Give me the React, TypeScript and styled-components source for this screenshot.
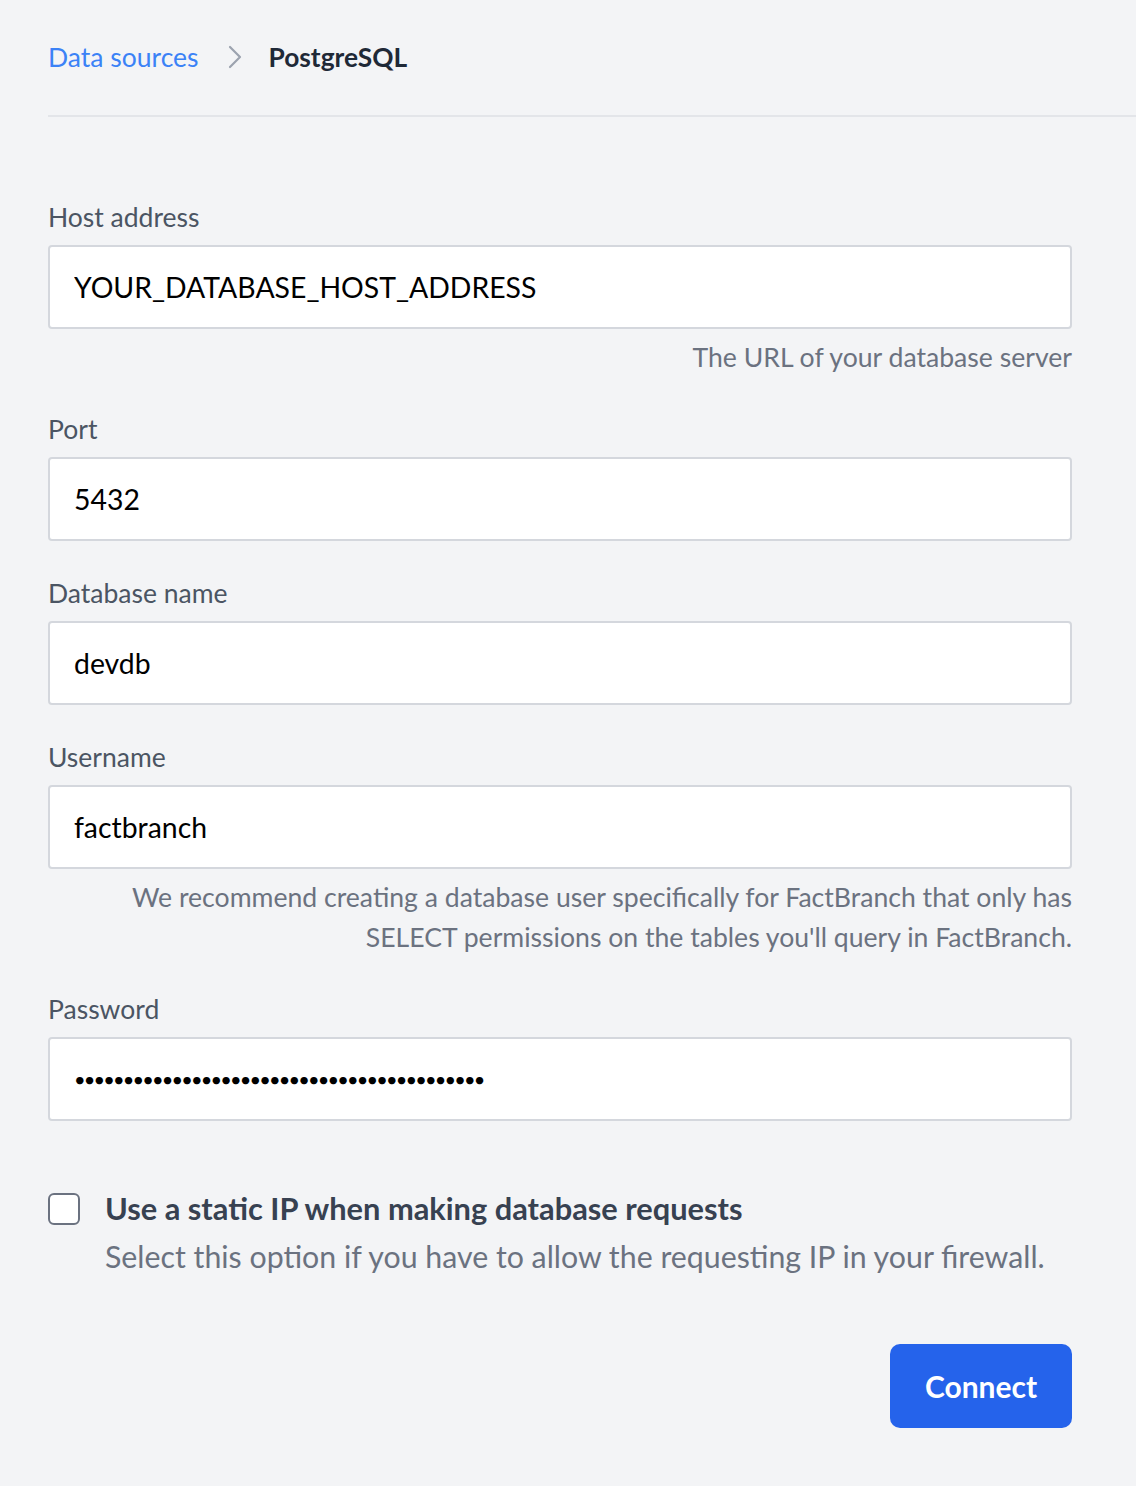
import React from 'react';
import styled, { createGlobalStyle } from 'styled-components';

const GlobalStyle = createGlobalStyle`
  html, body {
    margin: 0;
    padding: 0;
    background: #f3f4f6;
  }
  body {
    font-family: Lato, 'Liberation Sans', sans-serif;
    -webkit-font-smoothing: antialiased;
  }
  * {
    box-sizing: border-box;
  }
`;

const Page = styled.div`
  min-height: 1486px;
  padding-left: 48px;
  background: #f3f4f6;
`;

const Header = styled.div`
  height: 117px;
  display: flex;
  align-items: center;
  border-bottom: 2px solid #e3e5e9;
  padding-bottom: 2px;
`;

const Crumb = styled.a`
  font-size: 26.5px;
  color: #3b82f6;
  text-decoration: none;
`;

const Chevron = styled.span`
  display: flex;
  margin: 0 27px 0 29px;
  color: #9ca3af;
`;

const Current = styled.span`
  font-size: 26.3px;
  font-weight: 700;
  color: #1f2937;
`;

const Form = styled.form`
  width: 1024px;
  padding-top: 80px;
`;

const Field = styled.div`
  margin-bottom: 32px;
`;

const Label = styled.label`
  display: block;
  font-size: 26.5px;
  line-height: 40px;
  color: #4b5563;
  margin-bottom: 8px;
`;

const Input = styled.input<{ $secret?: boolean }>`
  display: block;
  width: 100%;
  height: 84px;
  padding: 0 24px;
  border: 2px solid #d4d7dd;
  border-radius: 4px;
  background: #fff;
  font-family: inherit;
  font-size: ${(p) => (p.$secret ? '20px' : '28.4px')};
  letter-spacing: ${(p) => (p.$secret ? '-1.85px' : 'normal')};
  color: #000;
  outline: none;
`;

const Help = styled.p`
  margin: 8px 0 0;
  font-size: 26.6px;
  line-height: 40px;
  color: #6b7280;
  text-align: right;
`;

const CheckRow = styled.div`
  display: flex;
  gap: 25px;
  margin-top: 68px;
`;

const Box = styled.span`
  flex: none;
  width: 32px;
  height: 32px;
  margin-top: 4px;
  border: 2px solid #6b7280;
  border-radius: 6px;
  background: #fff;
`;

const CheckText = styled.div`
  display: flex;
  flex-direction: column;
  gap: 7px;
`;

const CheckTitle = styled.span`
  font-size: 30.8px;
  line-height: 40px;
  font-weight: 700;
  color: #374151;
`;

const CheckDesc = styled.span`
  font-size: 30.3px;
  line-height: 40px;
  color: #6b7280;
`;

const Actions = styled.div`
  display: flex;
  justify-content: flex-end;
  margin-top: 68px;
`;

const Button = styled.button`
  width: 182px;
  height: 84px;
  border: none;
  border-radius: 10px;
  background: #2563eb;
  color: #fff;
  font-family: inherit;
  font-size: 30px;
  font-weight: 700;
`;

type FieldProps = {
  label: string;
  value: string;
  type?: string;
  help?: React.ReactNode;
};

const FormField = ({ label, value, type = 'text', help }: FieldProps) => (
  <Field>
    <Label>{label}</Label>
    <Input type={type} $secret={type === 'password'} defaultValue={value} readOnly />
    {help && <Help>{help}</Help>}
  </Field>
);

const App: React.FC = () => {
  return (
    <Page>
      <GlobalStyle />
      <Header>
        <Crumb href="#">Data sources</Crumb>
        <Chevron>
          <svg width="14" height="24" viewBox="0 0 14 24" fill="none">
            <path d="M2 2l10 10-10 10" stroke="currentColor" strokeWidth="2.2" strokeLinecap="round" strokeLinejoin="round" />
          </svg>
        </Chevron>
        <Current>PostgreSQL</Current>
      </Header>
      <Form onSubmit={(e) => e.preventDefault()}>
        <FormField label="Host address" value="YOUR_DATABASE_HOST_ADDRESS" help="The URL of your database server" />
        <FormField label="Port" value="5432" />
        <FormField label="Database name" value="devdb" />
        <FormField
          label="Username"
          value="factbranch"
          help={
            <>
              We recommend creating a database user specifically for FactBranch that only has
              <br />
              SELECT permissions on the tables you'll query in FactBranch.
            </>
          }
        />
        <FormField label="Password" type="password" value="xxxxxxxxxxxxxxxxxxxxxxxxxxxxxxxxxxxxxxxxxx" />
        <CheckRow>
          <Box />
          <CheckText>
            <CheckTitle>Use a static IP when making database requests</CheckTitle>
            <CheckDesc>Select this option if you have to allow the requesting IP in your firewall.</CheckDesc>
          </CheckText>
        </CheckRow>
        <Actions>
          <Button type="submit">Connect</Button>
        </Actions>
      </Form>
    </Page>
  );
};

export default App;
